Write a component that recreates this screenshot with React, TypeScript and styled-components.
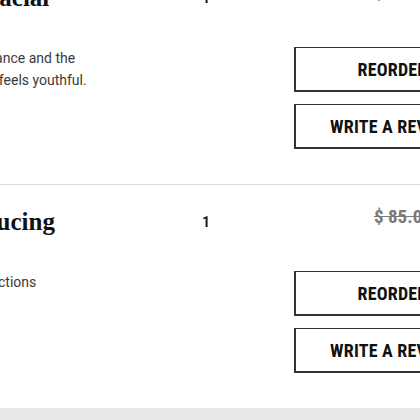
import styled, { createGlobalStyle } from "styled-components";

const GlobalStyle = createGlobalStyle`
  html, body {
    margin: 0;
    padding: 0;
    background: #fff;
    overflow: hidden;
  }
  body {
    font-family: Roboto, "Liberation Sans", Arial, sans-serif;
    color: #333;
  }
`;

const Page = styled.div`
  width: 420px;
  height: 420px;
  overflow: hidden;
  display: flex;
  flex-direction: column;
`;

const List = styled.div`
  margin-top: -40px;
  margin-left: -150px;
  width: 640px;
  display: flex;
  flex-direction: column;
`;

const Item = styled.div<{ $divider?: boolean }>`
  display: grid;
  grid-template-columns: 260px 104px 196px;
  column-gap: 40px;
  align-items: start;
  padding: 22px 0 35px;
  border-top: 1px solid ${(p) => (p.$divider ? "#dcdcdc" : "transparent")};
`;

const Info = styled.div`
  display: flex;
  flex-direction: column;
`;

const Title = styled.h2`
  margin: 0;
  font-family: "Liberation Serif", "Times New Roman", serif;
  font-weight: 700;
  font-size: 25px;
  line-height: 30px;
  color: #111;
  white-space: nowrap;
`;

const Desc = styled.p`
  margin: 34px 0 0;
  font-size: 14px;
  line-height: 22px;
  color: #3a3a3a;
`;

const Qty = styled.div`
  font-size: 14px;
  font-weight: 700;
  line-height: 30px;
  color: #1a1a1a;
  padding-left: 52px;
`;

const Actions = styled.div`
  display: flex;
  flex-direction: column;
  gap: 12px;
`;

const PriceRow = styled.div`
  display: flex;
  gap: 8px;
  height: 20px;
  padding-left: 80px;
  margin-bottom: 32px;
`;

const Price = styled.span<{ $old?: boolean }>`
  font-family: "Roboto Condensed", "Liberation Sans Narrow", "DejaVu Sans Condensed", sans-serif;
  font-weight: 700;
  font-size: 19px;
  line-height: 20px;
  color: ${(p) => (p.$old ? "#7a7a7a" : "#111")};
  text-decoration: ${(p) => (p.$old ? "line-through" : "none")};
  white-space: nowrap;
`;

const Button = styled.button`
  box-sizing: border-box;
  width: 196px;
  height: 45px;
  background: #fff;
  border-style: solid;
  border-color: #333;
  border-width: 1px 1px 2px 2px;
  font-family: "Roboto Condensed", "Liberation Sans Narrow", "DejaVu Sans Condensed", sans-serif;
  font-weight: 700;
  font-size: 18px;
  letter-spacing: 0.2px;
  color: #111;
  text-transform: uppercase;
  cursor: pointer;
  padding: 0;
`;

const Footer = styled.div`
  margin-top: auto;
  height: 12px;
  background: #e9e9e9;
`;

const orders = [
  {
    title: "Brightening Facial",
    desc: "Restores your skin's balance and the shine, so your skin tone feels youthful.",
    qty: 1,
    oldPrice: "$ 95.00",
    price: "$ 75.00",
  },
  {
    title: "Puffiness Reducing",
    desc: "Calm under-eye imperfections",
    qty: 1,
    oldPrice: "$ 85.00",
    price: "$ 65.00",
  },
];

export default function App() {
  return (
    <Page>
      <GlobalStyle />
      <List>
        {orders.map((o, i) => (
          <Item key={o.title} $divider={i > 0}>
            <Info>
              <Title>{o.title}</Title>
              <Desc>{o.desc}</Desc>
            </Info>
            <Qty>{o.qty}</Qty>
            <Actions>
              <PriceRow>
                <Price $old>{o.oldPrice}</Price>
                <Price>{o.price}</Price>
              </PriceRow>
              <Button>Reorder</Button>
              <Button>Write a review</Button>
            </Actions>
          </Item>
        ))}
      </List>
      <Footer />
    </Page>
  );
}
